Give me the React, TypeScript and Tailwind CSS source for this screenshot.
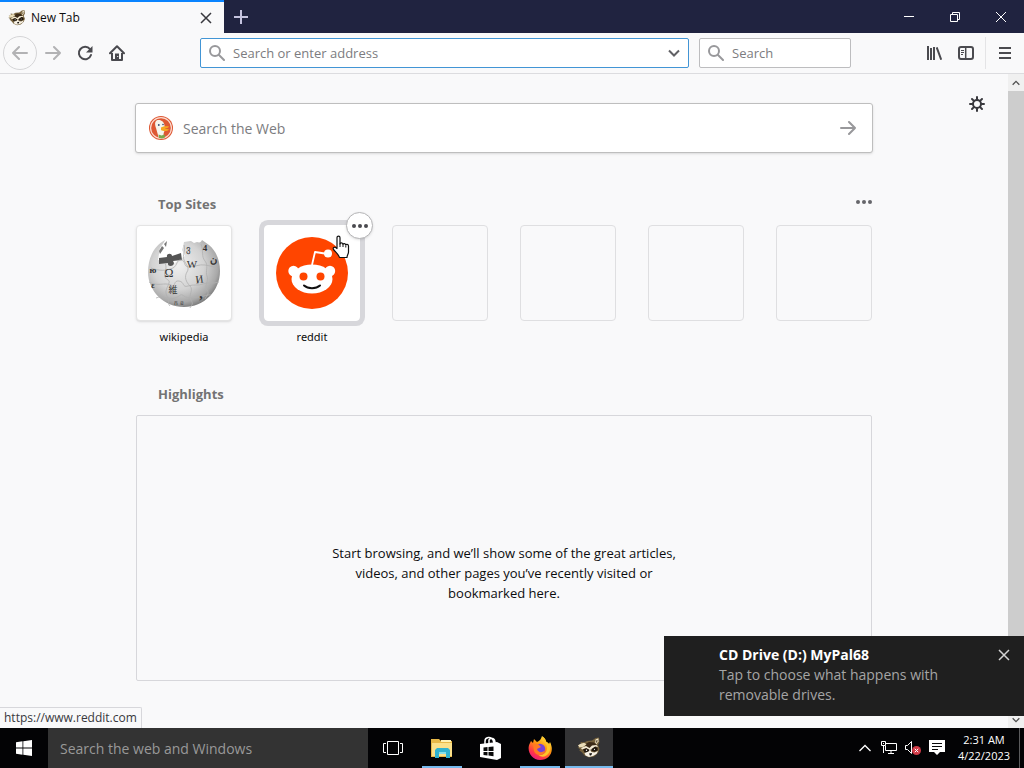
import React from "react";

type IconProps = { className?: string };

const FONT = "font-['Open_Sans','Noto_Sans',sans-serif]";

function Raccoon({ className }: IconProps) {
  return (
    <svg viewBox="0 0 24 24" className={className} aria-hidden="true">
      <path d="M1 9l3-.5L3.500 6 7 6.500 10 5l5-.5L18.500 2 22 1.500 22.500 6 21 9l1.500 4-1.500 4-4 3.500-5 1-4.500-2L5 16.500 2 14l1.500-.5L.5 11.500 3 11z" fill="#75613c" />
      <path d="M8 8.500L12 6l5 .5 3 3-1.500 4-4 1-5-1z" fill="#3b2a18" />
      <path d="M18.500 3.500l2.800-1.200.2 3-2 3-1.200-1.800z" fill="#efe4c8" />
      <path d="M19.300 4.500l1.200-.5-.3 2-1 1z" fill="#3b2a18" />
      <path d="M3 8l4-1.200 2.500 1.500-3 2.500-4 .7L1 9.500z" fill="#e9dcb8" />
      <path d="M4 12l5-2 3.500 2L15 9.500l4.500-.5 1.500 2-3-.5-3 3-3 .5-3-2-4 1.500z" fill="#f3ead3" />
      <path d="M6 13.500l3.500-1.300 2.800 1.500-.8 2.500-3.500.8zM14.500 13l3-2 3 .7.2 2.500-3 1.600-2.700-.8z" fill="#1f160d" />
      <path d="M7.500 17l4-1.500 1.500-2 1.500 2.500 3 .5 3.500-1.500-1.500 3-3.500 2-4 1-3.500-1.500z" fill="#f7f1e4" />
      <path d="M12 17.500l3-.5-.5 2-1.500.7z" fill="#171411" />
      <circle cx="9.500" cy="14.300" r=".7" fill="#fff" />
      <circle cx="17.500" cy="13.300" r=".6" fill="#fff" />
    </svg>
  );
}

function Close({ className }: IconProps) {
  return (
    <svg viewBox="0 0 12 12" className={className} fill="none" stroke="currentColor" aria-hidden="true">
      <path d="M1 1l10 10M11 1L1 11" />
    </svg>
  );
}

function Arrow({ className }: IconProps) {
  return (
    <svg viewBox="0 0 16 16" className={className} fill="none" stroke="currentColor" strokeWidth="2" strokeLinecap="round" strokeLinejoin="round" aria-hidden="true">
      <path d="M1 8h14M9 2l6 6-6 6" />
    </svg>
  );
}

function Magnifier({ className }: IconProps) {
  return (
    <svg viewBox="0 0 16 16" className={className} fill="none" stroke="currentColor" strokeWidth="2" strokeLinecap="round" aria-hidden="true">
      <circle cx="6" cy="6" r="5" />
      <path d="M10 10l5 5" />
    </svg>
  );
}

function Dots({ className }: IconProps) {
  return (
    <svg viewBox="0 0 16 4" className={className} fill="currentColor" aria-hidden="true">
      <circle cx="2" cy="2" r="2" />
      <circle cx="8" cy="2" r="2" />
      <circle cx="14" cy="2" r="2" />
    </svg>
  );
}

function Chevron({ className }: IconProps) {
  return (
    <svg viewBox="0 0 12 8" className={className} fill="none" stroke="currentColor" strokeWidth="2" aria-hidden="true">
      <path d="M1 1.500l5 5 5-5" />
    </svg>
  );
}

function Reload() {
  return (
    <svg viewBox="0 0 16 16" className="size-4" fill="none" stroke="currentColor" strokeWidth="2" aria-hidden="true">
      <path d="M13 4.200A6.200 6.200 0 1 0 14 10" strokeLinecap="round" />
      <path d="M15.500 1v6.500H9z" fill="currentColor" stroke="none" />
    </svg>
  );
}

function Home() {
  return (
    <svg viewBox="0 0 16 16" className="size-4" aria-hidden="true">
      <path d="M1 8.200L8 1.200l7 7" fill="none" stroke="currentColor" strokeWidth="2" strokeLinecap="round" strokeLinejoin="round" />
      <path d="M3 8v7h10V8" fill="none" stroke="currentColor" strokeWidth="2" strokeLinejoin="round" />
      <path d="M6 8.500h4V15H6z" fill="currentColor" />
      <path d="M8.200 11h1v1h-1z" fill="#fff" />
    </svg>
  );
}

function Library() {
  return (
    <svg viewBox="0 0 16 16" className="size-4" fill="none" stroke="currentColor" strokeWidth="2" aria-hidden="true">
      <path d="M2 1v14M5 3v12M8 2v13M10.700 2.300L15.200 14.700" />
    </svg>
  );
}

function Sidebar() {
  return (
    <svg viewBox="0 0 16 16" className="size-4" fill="none" stroke="currentColor" aria-hidden="true">
      <rect x="1" y="2" width="14" height="12" rx="2" strokeWidth="2" />
      <path d="M7.700 2v12" strokeWidth="1.500" />
      <path d="M3 5.500h3M3 7.500h3M3 9.500h2" />
    </svg>
  );
}

function Gear() {
  return (
    <svg viewBox="0 0 16 16" className="size-4" fill="none" stroke="currentColor" strokeWidth="2" strokeLinecap="round" aria-hidden="true">
      <circle cx="8" cy="8" r="4" />
      <path d="M8 1v2.500M8 12.500V15M1 8h2.500M12.500 8H15M3 3l1.900 1.900M11.100 11.100L13 13M13 3l-1.900 1.900M4.900 11.100L3 13" />
    </svg>
  );
}

function Duck() {
  return (
    <svg viewBox="0 0 24 24" className="size-6 shrink-0" aria-hidden="true">
      <circle cx="12" cy="12" r="12" fill="#de5833" />
      <circle cx="12" cy="12" r="10.400" fill="none" stroke="#fbdcd2" strokeWidth="1.200" />
      <path d="M7.500 4.500c4-1.500 7.500 1 8 5l.5 4c-1 3-2 4-1 7.500-2 .7-4 .6-5.500 0L7 12C6 9 5.500 6 7.500 4.500z" fill="#f5f4ec" />
      <path d="M12 11.500c2-1.500 6-1.600 8-1-.5 1.500-3 1.800-4.500 2.300 1.500.5 3.500.2 4.500.6-1.500 2.200-6 2-8 .5z" fill="#f6a723" />
      <path d="M9.500 18.500l3 1 3-1 .5 3-3 1-3-.5z" fill="#79a94c" />
      <circle cx="9.800" cy="9" r=".9" fill="#344a70" />
      <circle cx="14" cy="8.500" r=".8" fill="#344a70" />
    </svg>
  );
}

function WikipediaGlobe() {
  return (
    <svg viewBox="0 0 94 94" className="size-[94px]" aria-hidden="true">
      <defs>
        <radialGradient id="globe" cx="42%" cy="38%" r="65%">
          <stop offset="0" stopColor="#f0f0f0" />
          <stop offset=".55" stopColor="#d3d3d3" />
          <stop offset=".85" stopColor="#a8a8a8" />
          <stop offset="1" stopColor="#777" />
        </radialGradient>
      </defs>
      <path
        d="M28 14c-1 3-3 5-5 8l-2 12 15 4 12-8-3-6 1-3 1-5 7-1 3 2 3-1c3 1 4 0 5-2l7 5c7 6 11 15 11 26 0 20-16 36-36 36S11 65 11 46c0-14 6-26 17-32z"
        fill="url(#globe)"
      />
      <path d="M22 32l8-1c-1-4 5-4 5-1l9-3 1 7-9 1c4 5-6 7-5 2l-9 1z" fill="#555" />
      <g fill="none" stroke="#b0b0b0" strokeWidth=".8">
        <path d="M14 42c8 3 15 3 22 0 5-3 3-8 8-8s2 7 8 7 10-3 16-2 9 2 12 3" />
        <path d="M12 56c9 5 15 0 22 3 5 3 2-5 8-4s3 7 9 5 10 0 15-2 10 0 16-2" />
        <path d="M19 72c7-3 13 2 19 0s5-5 9-2 10 1 15 1 8-3 12-2" />
        <path d="M28 37c3 6-2 10 0 14s5 2 4 6-5 8-2 13 0 7 3 10" />
        <path d="M47 19c2 6-2 10 0 15s6 7 3 12-1 10 3 14-2 9 1 14 0 5-1 8" />
        <path d="M64 18c3 8 0 12 4 17s0 10 2 15-3 10 0 14-1 6-2 9" />
      </g>
      <g fill="#333" fontFamily="Liberation Serif, serif" fontSize="10" textAnchor="middle">
        <text x="32" y="51" fontSize="12">Ω</text>
        <text x="55" y="42" fontSize="11">W</text>
        <text x="63" y="57" fontSize="11" transform="rotate(-8 63 57)">И</text>
        <text x="36" y="67" fontSize="9" fontFamily="Noto Sans CJK JP, sans-serif">維</text>
        <text x="16" y="47" fontSize="9" fontWeight="bold">ю</text>
        <text x="16" y="62" fontSize="8" fontWeight="bold">ε</text>
        <text x="51" y="26" fontSize="9">ვ</text>
        <text x="68" y="25" fontSize="9" fontWeight="bold">4</text>
        <text x="76" y="37" fontSize="10" fontWeight="bold">ن</text>
        <text x="64" y="72" fontSize="14" fontWeight="bold">,</text>
        <text x="42" y="79" fontSize="6">ក ខ</text>
      </g>
      <path d="M22 25l3-5 2 2-4 6zM27 18l3-3-1 6zM18 33l3-2" fill="#777" />
    </svg>
  );
}

function Snoo() {
  return (
    <svg viewBox="0 0 72 72" className="size-18" aria-hidden="true">
      <circle cx="36" cy="36" r="36" fill="#ff4500" />
      <path d="M36 28l3-13 13 2" fill="none" stroke="#fff" strokeWidth="1.800" strokeLinejoin="round" />
      <circle cx="52" cy="16.500" r="4" fill="#fff" />
      <circle cx="17.500" cy="34" r="5.200" fill="#fff" />
      <circle cx="54" cy="34" r="5.200" fill="#fff" />
      <ellipse cx="36" cy="42" rx="20.500" ry="14.500" fill="#fff" />
      <circle cx="27.500" cy="39.500" r="4" fill="#ff4500" />
      <circle cx="44.500" cy="39.500" r="4" fill="#ff4500" />
      <path d="M28 48.500c4 3.500 12 3.500 16 0" fill="none" stroke="#111" strokeWidth="2" strokeLinecap="round" />
    </svg>
  );
}

function HandCursor() {
  return (
    <svg viewBox="0 0 18 24" className="pointer-events-none absolute top-2.5 left-17 z-10 h-6 w-[18px]" aria-hidden="true">
      <path
        d="M5 13.500V2.800C5 .5 8 .5 8 2.800V9c0-1.500 3-1.500 3 .5 0-1.500 2.800-1.200 2.800.5 0-1 2.700-.8 2.700 1v6c0 2-1.500 3-1.500 5.500H7.500C7 20 4 17.500 1.500 14.500c-1-1.500 1-3 2.200-2z"
        fill="#fff"
        stroke="#111"
        strokeWidth="1.200"
        strokeLinejoin="round"
      />
      <path d="M8 8.500V12M11 9.500V12M13.800 10.500V12.500" stroke="#111" strokeWidth="1" />
    </svg>
  );
}

function TaskView() {
  return (
    <svg viewBox="0 0 20 16" className="h-4 w-5" fill="none" stroke="#fff" aria-hidden="true">
      <path d="M4.500 1.500h11v13h-11zM3 3.500H.5v9H3M17 3.500h2.500v9H17" />
    </svg>
  );
}

function Explorer() {
  return (
    <svg viewBox="0 0 22 20" className="h-5 w-[22px]" aria-hidden="true">
      <path d="M0 1h8l2 2h11v16H0z" fill="#e8b948" />
      <path d="M1 5h20v13H1z" fill="#fbe08a" />
      <path d="M10 2h10v2H10z" fill="#fff1b5" />
      <path d="M4 12l2-2h11l2 2v8h-4v-4H8v4H4z" fill="#31b3cf" />
      <path d="M8 14h7v2H8z" fill="#85e0ea" />
    </svg>
  );
}

function Store() {
  return (
    <svg viewBox="0 0 22 24" className="h-6 w-[22px]" aria-hidden="true">
      <path d="M5 8V5c0-4 6-5 8-1l1 3M9 7V4c2-3 6-2 6 3" fill="none" stroke="#fff" strokeWidth="1.500" />
      <path d="M0 8l17-2 4 2v14l-4 2-17-3z" fill="#fff" />
      <path d="M3.500 11.500l4-.5v4h-4zM8.500 11l5-.6V15h-5zM3.500 16h4v3.500l-4-.5zM8.500 16h5v4.300l-5-.7z" fill="#090909" />
    </svg>
  );
}

function Firefox() {
  return (
    <svg viewBox="0 0 24 24" className="size-6" aria-hidden="true">
      <defs>
        <linearGradient id="fox" x1="0.8" y1="0" x2="0.2" y2="1">
          <stop offset="0" stopColor="#fff44f" />
          <stop offset=".4" stopColor="#ff980e" />
          <stop offset=".75" stopColor="#ff3647" />
          <stop offset="1" stopColor="#e31587" />
        </linearGradient>
      </defs>
      <path d="M14 0c3 2 4 4 4 6 2 0 3 2 3 2l1-2c5 10-1 18-10 18C3 24-2 14 2 7l1-2 2 2 1-4 3 3c3-1 4-3 5-6z" fill="url(#fox)" />
      <circle cx="12" cy="13" r="5.200" fill="#7542d8" />
      <path d="M5 8l5 0 3 3-4 2c1 4 6 4 8 1-1 6-9 7-11 1z" fill="#ff7b22" />
      <path d="M14 1c0 4 5 5 5 11 0 5-5 8-9 7 7 5 13-2 12-8-1-4-3-4-4-6-1-2-2-4-4-4z" fill="#ffc52b" />
    </svg>
  );
}

const taskButton = "relative flex h-10 w-12 items-center justify-center";
const toolButton = "flex size-8 items-center justify-center text-[#4a4a4f]";
const tile = "flex size-24 items-center justify-center rounded border";
const tileLabel = "mt-2 font-['Noto_Sans',sans-serif] text-[11px] leading-4 text-[#0c0c0d]";
const fieldInput = "mt-0.5 ml-2 min-w-0 flex-1 bg-transparent text-[13px] outline-none placeholder:text-[#7c7c80]";

function TitleBar() {
  return (
    <header className="flex h-[33px] shrink-0 bg-[#202340] text-white">
      <div className="flex w-56 items-center border-t-2 border-[#0a84ff] bg-[#f9f9fa] px-2 text-[#0c0c0d]">
        <Raccoon className="size-[18px]" />
        <span className="ml-[5px] flex-1 text-[12px]">New Tab</span>
        <button aria-label="Close tab" className="flex size-5 items-center justify-center text-[#38383d]">
          <Close className="size-3 stroke-[1.5]" />
        </button>
      </div>
      <button aria-label="New tab" className="flex w-[34px] items-center justify-center text-[#c5c3df]">
        <svg viewBox="0 0 14 14" className="size-3.5" stroke="currentColor" strokeWidth="2" aria-hidden="true">
          <path d="M7 0v14M0 7h14" />
        </svg>
      </button>
      <div className="ml-auto flex">
        <button aria-label="Minimize" className="flex w-[46px] items-center justify-center">
          <svg viewBox="0 0 10 10" className="size-2.5" stroke="currentColor" aria-hidden="true"><path d="M0 4.500h10" /></svg>
        </button>
        <button aria-label="Restore" className="flex w-[46px] items-center justify-center">
          <svg viewBox="0 0 10 10" className="size-2.5" fill="none" stroke="currentColor" aria-hidden="true"><path d="M.5 2.500h7v7h-7zM2.500 2V.5h7v7H8" /></svg>
        </button>
        <button aria-label="Close window" className="flex w-[46px] items-center justify-center">
          <svg viewBox="0 0 10 10" className="size-2.5" stroke="currentColor" aria-hidden="true"><path d="M0 0l10 10M10 0L0 10" /></svg>
        </button>
      </div>
    </header>
  );
}

function Toolbar() {
  return (
    <nav className="flex h-[41px] shrink-0 items-center border-b border-[#dcdcdf] bg-[#f9f9fa] pr-1 pl-[3px]">
      <button aria-label="Back" className="flex size-[34px] items-center justify-center rounded-full border border-[#d5d5d7] text-[#b2b2b4]">
        <Arrow className="size-4 rotate-180" />
      </button>
      <button aria-label="Forward" className="flex size-8 items-center justify-center text-[#b2b2b4]"><Arrow className="size-4" /></button>
      <button aria-label="Reload" className={toolButton}><Reload /></button>
      <button aria-label="Home" className={toolButton}><Home /></button>
      <div className="ml-[67px] flex h-[30px] flex-1 items-center rounded-xs border border-[#4295d5] bg-white px-2">
        <Magnifier className="size-4 shrink-0 text-[#98989b]" />
        <input aria-label="Search or enter address" placeholder="Search or enter address" className={fieldInput} />
        <button aria-label="Show history" className="text-[#616165]"><Chevron className="h-2 w-3" /></button>
      </div>
      <div className="ml-2.5 flex h-[30px] w-38 items-center rounded-xs border border-[#bdbdbf] bg-white px-2">
        <Magnifier className="size-4 shrink-0 text-[#98989b]" />
        <input aria-label="Search" placeholder="Search" className={fieldInput} />
      </div>
      <button aria-label="Library" className={`${toolButton} ml-[67px]`}><Library /></button>
      <button aria-label="Sidebars" className={toolButton}><Sidebar /></button>
      <div className="ml-[3px] flex h-8 items-center border-l border-[#e4e4e6]">
        <button aria-label="Open menu" className="flex size-[34px] items-center justify-center text-[#4a4a4f]">
          <svg viewBox="0 0 12 12" className="ml-1 size-3" stroke="currentColor" strokeWidth="2" aria-hidden="true"><path d="M0 1h12M0 6h12M0 11h12" /></svg>
        </button>
      </div>
    </nav>
  );
}

function NewTabPage() {
  return (
    <main className="relative flex min-h-0 flex-1 overflow-hidden bg-[#f9f9fa]">
      <div className="min-w-0 flex-1 pt-[29px]">
        <div className="mx-auto max-w-[738px]">
          <form className="flex h-[50px] items-center rounded-[3px] border border-[#bebebe] bg-white pr-4 pl-[13px] shadow-sm" onSubmit={(e) => e.preventDefault()}>
            <Duck />
            <input aria-label="Search the Web" placeholder="Search the Web" className="ml-2.5 min-w-0 flex-1 bg-transparent text-[14px] outline-none placeholder:text-[#7c7c80]" />
            <button aria-label="Submit search" className="text-[#98989b]"><Arrow className="size-4" /></button>
          </form>
          <section className="mt-10 px-px">
            <div className="flex h-5 items-start justify-between pl-[22px]">
              <h2 className="mt-px text-[13px] leading-5 font-bold text-[#737373]">Top Sites</h2>
              <button aria-label="Section options" className="flex h-[18px] items-center text-[#66666a]"><Dots className="h-1 w-4" /></button>
            </div>
            <div className="mt-3 flex items-start justify-between">
              <a href="https://www.wikipedia.org" className="flex flex-col items-center">
                <span className={`${tile} border-[#e4e4e4] bg-white shadow-sm`}><WikipediaGlobe /></span>
                <span className={tileLabel}>wikipedia</span>
              </a>
              <div className="relative">
                <a href="https://www.reddit.com" className="flex flex-col items-center">
                  <span className={`${tile} border-white bg-white ring-5 ring-[#d7d7db]`}><Snoo /></span>
                  <span className={tileLabel}>reddit</span>
                </a>
                <button aria-label="Open reddit menu" className="absolute -top-[13px] -right-[13px] flex size-[27px] items-center justify-center rounded-full border border-[#b5b5b7] bg-white text-[#4a4a4f] shadow-sm">
                  <Dots className="h-1 w-4" />
                </button>
                <HandCursor />
              </div>
              {[1, 2, 3, 4].map((slot) => (
                <span key={slot} className={`${tile} border-[#dfdfe1]`} />
              ))}
            </div>
          </section>
          <section className="mt-[39px] px-px">
            <h2 className="pl-[22px] text-[13px] leading-5 font-bold text-[#737373]">Highlights</h2>
            <div className="mt-[11px] flex h-[266px] justify-center rounded-xs border border-[#d7d7db] pt-[127px]">
              <p className="w-[352px] text-center text-[13px] leading-5 text-[#0c0c0d]">
                Start browsing, and we’ll show some of the great articles, videos, and other pages you’ve recently visited or bookmarked here.
              </p>
            </div>
          </section>
        </div>
      </div>
      <button aria-label="Customize page" className="absolute top-[22px] right-[39px] text-[#38383d]"><Gear /></button>
      <div className="flex w-4 shrink-0 flex-col bg-[#f0f0f0] text-[#505050]" aria-hidden="true">
        <span className="flex h-[17px] items-center justify-center"><Chevron className="h-1.5 w-2 rotate-180" /></span>
        <span className="flex-1 bg-[#cdcdcd]" />
        <span className="flex h-[17px] items-center justify-center"><Chevron className="h-1.5 w-2" /></span>
      </div>
      <output className="absolute bottom-0 left-0 flex h-[21px] items-center rounded-tr-xs border-t border-r border-[#d7d7db] bg-[#f9f9fa] px-1 text-[12px] text-[#38383d]">
        https://www.reddit.com
      </output>
      <aside className="absolute right-0 bottom-3 flex h-20 w-[360px] justify-between bg-[#1f1f1f] pt-[9px] pr-3.5 pl-[55px] text-[14px] leading-5">
        <div className="w-[240px]">
          <h3 className="font-bold text-white">CD Drive (D:) MyPal68</h3>
          <p className="text-[#a5a5a5]">Tap to choose what happens with removable drives.</p>
        </div>
        <button aria-label="Dismiss notification" className="flex h-5 items-center text-[#d4d4d4]"><Close className="size-3 stroke-[1.5]" /></button>
      </aside>
    </main>
  );
}

function Taskbar() {
  return (
    <footer className="flex h-10 shrink-0 items-center bg-[#030305] text-white">
      <button aria-label="Start" className="flex h-10 w-12 items-center justify-center">
        <svg viewBox="0 0 16 16" className="size-4" fill="#fff" aria-hidden="true">
          <path d="M0 2.200L6.500 1.300V7.500H0zM7.300 1.200L16 0v7.500H7.300zM0 8.400h6.500v6.300L0 13.800zM7.300 8.400H16V16l-8.700-1.200z" />
        </svg>
      </button>
      <input aria-label="Search the web and Windows" placeholder="Search the web and Windows" className="h-10 w-80 bg-[#333333] px-3 text-[14px] outline-none placeholder:text-[#999]" />
      <div className="ml-px flex gap-px">
        <button aria-label="Task view" className={taskButton}><TaskView /></button>
        <button aria-label="File Explorer" className={taskButton}>
          <Explorer />
          <span className="absolute inset-x-1 bottom-0 h-0.5 bg-[#76b9ed]" />
        </button>
        <button aria-label="Store" className={taskButton}><Store /></button>
        <button aria-label="Firefox" className={taskButton}>
          <Firefox />
          <span className="absolute inset-x-1 bottom-0 h-0.5 bg-[#76b9ed]" />
        </button>
        <button aria-label="MyPal" className={`${taskButton} bg-[#333335]`}>
          <Raccoon className="size-6" />
          <span className="absolute inset-x-0 bottom-0 h-0.5 bg-[#76b9ed]" />
        </button>
      </div>
      <div className="ml-auto flex h-10 items-center">
        <button aria-label="Show hidden icons" className="mr-2.5">
          <svg viewBox="0 0 12 8" className="h-2 w-3" fill="none" stroke="#fff" strokeWidth="1.300" aria-hidden="true"><path d="M.5 7L6 1.500 11.500 7" /></svg>
        </button>
        <button aria-label="Network" className="mr-2">
          <svg viewBox="0 0 16 14" className="h-3.5 w-4" fill="none" stroke="#fff" aria-hidden="true">
            <path d="M5 2.500h10.500v7H4.500V5M7 12.500h6M10 9.500v3M.5.500h4v4h-4zM2.500 4.500V12" />
            <path d="M2 2h1v1H2z" fill="#fff" stroke="none" />
          </svg>
        </button>
        <button aria-label="Volume" className="mr-2">
          <svg viewBox="0 0 16 14" className="h-3.5 w-4" aria-hidden="true">
            <path d="M.5 4.500h2l4-4v12l-4-4h-2z" fill="none" stroke="#fff" />
            <circle cx="11.500" cy="9.500" r="4.500" fill="#d13b48" />
            <path d="M9.800 7.800l3.400 3.400M13.200 7.800l-3.400 3.400" stroke="#fff" />
          </svg>
        </button>
        <button aria-label="Notifications" className="mr-3">
          <svg viewBox="0 0 16 16" className="size-4" aria-hidden="true">
            <path d="M0 0h16v12h-5l-3 3-3-3H0z" fill="#fff" />
            <path d="M3 3.500h10M3 6.500h10M3 9.500h6" stroke="#08080a" />
          </svg>
        </button>
        <time className="mr-2 w-[54px] text-center text-[11px] leading-4">2:31 AM 4/22/2023</time>
        <button aria-label="Show desktop" className="h-10 w-[5px] border-l border-[#5a5a5c]" />
      </div>
    </footer>
  );
}

export default function App() {
  return (
    <div className={`flex h-screen min-h-[600px] flex-col overflow-hidden ${FONT}`}>
      <TitleBar />
      <Toolbar />
      <NewTabPage />
      <Taskbar />
    </div>
  );
}
